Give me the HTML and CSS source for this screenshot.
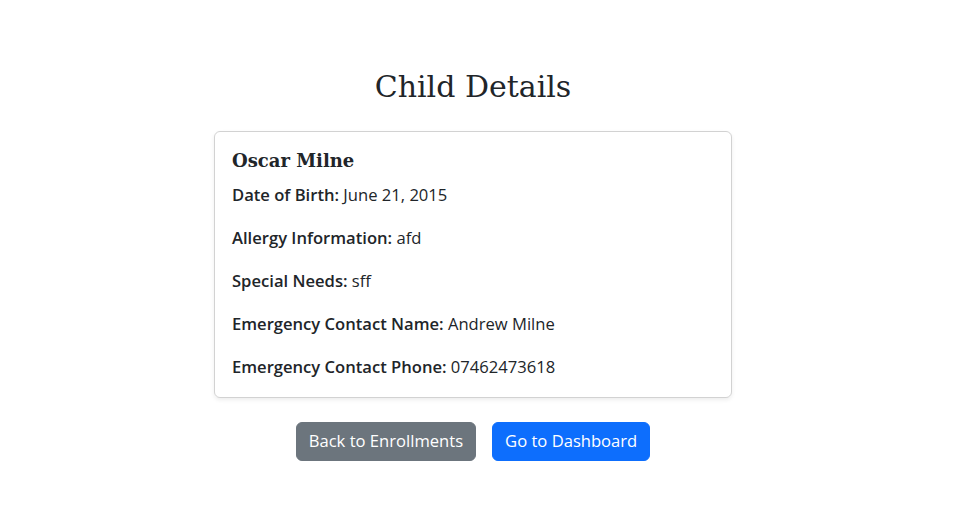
FILE: index.html
```html
<!DOCTYPE html>
<html lang="en">
<head>
<meta charset="utf-8">
<title>Child Details</title>
<link rel="stylesheet" href="styles.css">
</head>
<body>
<main class="page">
  <h2 class="page-title">Child Details</h2>
  <section class="card">
    <h5 class="card-title">Oscar Milne</h5>
    <p class="row"><strong>Date of Birth:</strong> June 21, 2015</p>
    <p class="row"><strong>Allergy Information:</strong> afd</p>
    <p class="row"><strong>Special Needs:</strong> sff</p>
    <p class="row"><strong>Emergency Contact Name:</strong> Andrew Milne</p>
    <p class="row"><strong>Emergency Contact Phone:</strong> 07462473618</p>
  </section>
  <div class="actions">
    <a class="btn btn-secondary" href="#">Back to Enrollments</a>
    <a class="btn btn-primary" href="#">Go to Dashboard</a>
  </div>
</main>
</body>
</html>
```
FILE: styles.css
```css
* { box-sizing: border-box; }
html, body { margin: 0; background: #fff; }
body {
  font-family: "Open Sans", "Noto Sans", sans-serif;
  font-size: 16.6px;
  color: #212529;
}
.page {
  display: flex;
  flex-direction: column;
  align-items: center;
  padding: 68px 21px 0 0;
}
.page-title {
  font-family: "DejaVu Serif", "Liberation Serif", serif;
  font-weight: 400;
  font-size: 30px;
  line-height: 38px;
  margin: 0 0 25px;
  color: #212529;
}
.card {
  width: 518px;
  border: 1px solid rgba(0,0,0,.175);
  border-radius: 6px;
  box-shadow: 0 2px 4px rgba(0,0,0,.075);
  padding: 16px 17px 17px;
}
.card-title {
  font-family: "DejaVu Serif", "Liberation Serif", serif;
  font-weight: 700;
  font-size: 18px;
  line-height: 26px;
  margin: 0 0 7px;
}
.row {
  margin: 0 0 16px;
  line-height: 27px;
}
.row:last-child { margin-bottom: 0; }
.row strong { font-weight: 600; }
.actions {
  display: flex;
  gap: 16px;
  margin-top: 24px;
}
.btn {
  display: inline-block;
  padding: 6px 12px 7px;
  border: 1px solid transparent;
  border-radius: 6px;
  color: #fff;
  text-decoration: none;
  line-height: 24px;
  font-size: 16.6px;
}
.btn-secondary { background: #6c757d; border-color: #6c757d; }
.btn-primary { background: #0d6efd; border-color: #0d6efd; }
```
